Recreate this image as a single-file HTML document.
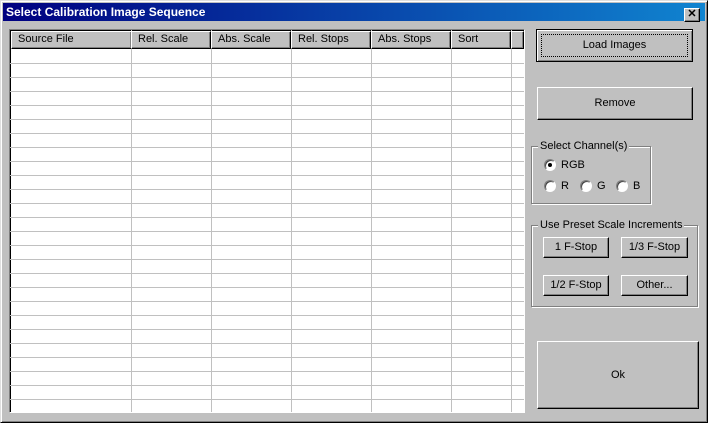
<!DOCTYPE html><html><head><style>
*{box-sizing:border-box;margin:0;padding:0}
body{width:708px;height:423px;background:#c0c0c0;font-family:"Liberation Sans",sans-serif;font-size:11px;position:relative;overflow:hidden}
.frame{position:absolute;left:0;top:0;width:708px;height:423px;border:1px solid;border-color:#dfdfdf #000 #000 #dfdfdf;box-shadow:inset 1px 1px #fff,inset -1px -1px #808080}
.title{position:absolute;left:3px;top:3px;width:702px;height:18px;background:linear-gradient(90deg,#000080,#1084d0);color:#fff;font-weight:bold;font-size:12px;line-height:18px;padding-left:3px}
.x{position:absolute;right:5px;top:5px;width:16px;height:14px;background:#c0c0c0;border:1px solid;border-color:#fff #000 #000 #fff;box-shadow:inset -1px -1px #808080;font-size:11px;line-height:11px;text-align:center;color:#000;font-weight:bold}
.ab{position:absolute}
.table{left:9px;top:29px;width:516px;height:384px;border:1px solid;border-color:#808080 #fff #fff #808080;background:#fff;box-shadow:inset 1px 1px #000;overflow:hidden}
.hd{position:absolute;top:1px;height:18px;background:#c0c0c0;border:1px solid;border-color:#fff #000 #000 #fff;box-shadow:inset -1px -1px #808080;padding-left:6px;line-height:15px;color:#000}
.btn{position:absolute;background:#c0c0c0;border:1px solid;border-color:#fff #000 #000 #fff;box-shadow:inset -1px -1px #808080;text-align:center;color:#000}
.grp{position:absolute;border:1px solid #808080;box-shadow:1px 1px #fff,inset 1px 1px #fff}
.grp span{position:absolute;top:-7px;left:6px;background:#c0c0c0;padding:0 2px;line-height:12px}
.r{position:absolute;width:12px;height:12px;border-radius:50%;background:#fff;border:1px solid;border-color:#808080 #fff #fff #808080;box-shadow:inset 1px 1px #404040}
.lbl{position:absolute;line-height:12px}
</style></head><body>
<div class="frame"></div>
<div class="title">Select Calibration Image Sequence<div class="x">✕</div></div>
<div class="ab table">
<svg width="516" height="384" style="position:absolute;left:0;top:0">
<g stroke="#c0c0c0" stroke-width="1">
<line x1="121.5" y1="0" x2="121.5" y2="384"/><line x1="201.5" y1="0" x2="201.5" y2="384"/><line x1="281.5" y1="0" x2="281.5" y2="384"/><line x1="361.5" y1="0" x2="361.5" y2="384"/><line x1="441.5" y1="0" x2="441.5" y2="384"/><line x1="501.5" y1="0" x2="501.5" y2="384"/>
<path d="M0 33.5H516M0 47.5H516M0 61.5H516M0 75.5H516M0 89.5H516M0 103.5H516M0 117.5H516M0 131.5H516M0 145.5H516M0 159.5H516M0 173.5H516M0 187.5H516M0 201.5H516M0 215.5H516M0 229.5H516M0 243.5H516M0 257.5H516M0 271.5H516M0 285.5H516M0 299.5H516M0 313.5H516M0 327.5H516M0 341.5H516M0 355.5H516M0 369.5H516"/>
</g></svg>
<div class="hd" style="left:1px;width:121px">Source File</div>
<div class="hd" style="left:121px;width:80px">Rel. Scale</div>
<div class="hd" style="left:201px;width:80px">Abs. Scale</div>
<div class="hd" style="left:281px;width:80px">Rel. Stops</div>
<div class="hd" style="left:361px;width:80px">Abs. Stops</div>
<div class="hd" style="left:441px;width:60px">Sort</div>
<div class="hd" style="left:501px;width:13px"></div>
</div>
<div class="btn" style="left:536px;top:29px;width:157px;height:33px;border:1px solid #000;box-shadow:inset 1px 1px #fff,inset -1px -1px #808080;line-height:30px">Load Images<div style="position:absolute;left:4px;top:4px;right:4px;bottom:4px;border:1px dotted #000"></div></div>
<div class="btn" style="left:537px;top:87px;width:156px;height:33px;line-height:30px">Remove</div>
<div class="grp" style="left:531px;top:146px;width:120px;height:58px"><span>Select Channel(s)</span></div>
<div class="r" style="left:544px;top:159px"><div style="position:absolute;left:3px;top:3px;width:4px;height:4px;background:#000;border-radius:50%"></div></div>
<div class="lbl" style="left:561px;top:159px">RGB</div>
<div class="r" style="left:544px;top:180px"></div><div class="lbl" style="left:561px;top:180px">R</div>
<div class="r" style="left:580px;top:180px"></div><div class="lbl" style="left:597px;top:180px">G</div>
<div class="r" style="left:616px;top:180px"></div><div class="lbl" style="left:633px;top:180px">B</div>
<div class="grp" style="left:531px;top:225px;width:167px;height:82px"><span>Use Preset Scale Increments</span></div>
<div class="btn" style="left:543px;top:237px;width:66px;height:21px;line-height:18px">1 F-Stop</div>
<div class="btn" style="left:621px;top:237px;width:67px;height:21px;line-height:18px">1/3 F-Stop</div>
<div class="btn" style="left:543px;top:275px;width:66px;height:21px;line-height:18px">1/2 F-Stop</div>
<div class="btn" style="left:621px;top:275px;width:67px;height:21px;line-height:18px">Other...</div>
<div class="btn" style="left:537px;top:341px;width:162px;height:68px;line-height:66px">Ok</div>
</body></html>
